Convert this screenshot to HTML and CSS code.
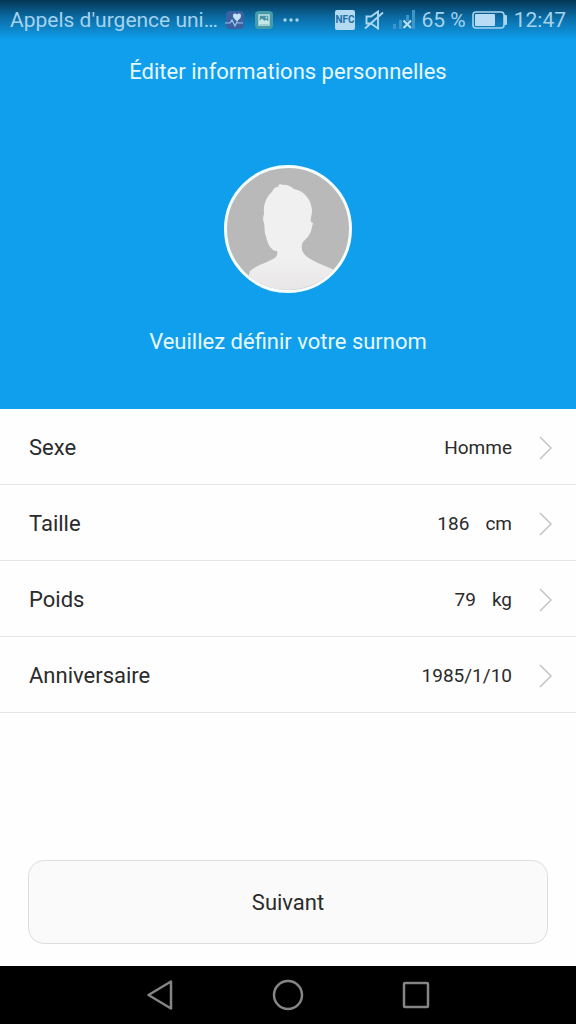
FILE: index.html
```html
<!DOCTYPE html>
<html lang="fr">
<head>
<meta charset="utf-8">
<meta name="viewport" content="width=device-width, initial-scale=1">
<title>Éditer informations personnelles</title>
<link rel="stylesheet" href="styles.css">
</head>
<body>
<header class="hero">
  <div class="status">
    <span class="carrier">Appels d'urgence uni…</span>
    <div class="notifications">
      <svg class="app-icon" width="20" height="20" viewBox="0 0 20 20" aria-hidden="true">
        <rect x="1" y="1" width="18" height="18" rx="4" fill="#3c61a3"/>
        <path d="M12 11.500L8.600 8C6.500 3.500 10.500 2.500 12 4.500C13.500 2.500 17.500 3.500 15.400 8Z" fill="#c4e2f5"/>
        <path d="M0 13H5L7 10L10 16L12 12L13 13H18" fill="none" stroke="#9ac5e7" stroke-width="1.200"/>
      </svg>
      <svg class="app-icon" width="20" height="20" viewBox="0 0 20 20" aria-hidden="true">
        <rect x="1" y="1" width="18" height="18" rx="4" fill="#459ba7"/>
        <rect x="5" y="5" width="10" height="10" fill="#4591a3" stroke="#bfe2e5" stroke-width="1.500"/>
        <path d="M5 14V11.500L8 8.500L10.500 11L12 9.500L15 12V14Z" fill="#c5e6e7"/>
        <circle cx="12.500" cy="7.500" r="1" fill="#c5e6e7"/>
      </svg>
      <svg width="16" height="4" viewBox="0 0 16 4" aria-hidden="true">
        <g fill="#a9d6f2"><circle cx="2" cy="2" r="1.700"/><circle cx="8" cy="2" r="1.700"/><circle cx="14" cy="2" r="1.700"/></g>
      </svg>
    </div>
    <div class="system">
      <span class="nfc">NFC</span>
      <svg class="mute" width="20" height="20" viewBox="0 0 20 20" aria-hidden="true">
        <path d="M2.500 6.500H7L14 1.500V18.500L7 13.500H2.500ZM1 18.500L19 2.500" fill="none" stroke="#acd7f1" stroke-width="1.900"/>
      </svg>
      <svg class="signal" width="24" height="20" viewBox="0 0 24 20" aria-hidden="true">
        <g fill="#3e95c9"><rect x="1" y="14" width="3" height="5"/><rect x="7" y="10" width="3" height="9"/><rect x="14" y="5" width="3" height="6"/><rect x="20" y="0" width="3" height="19"/></g>
        <path d="M11.500 10.500L19 18M19 10.500L11.500 18" stroke="#c1e2f5" stroke-width="2"/>
      </svg>
      <span>65 %</span>
      <svg class="battery" width="36" height="18" viewBox="0 0 36 18" aria-hidden="true">
        <rect x="1" y="1" width="31" height="16" rx="3" fill="none" stroke="#a9d5ef" stroke-width="1.600"/>
        <rect x="3" y="3" width="20" height="12" rx="1" fill="#b7dcf3"/>
        <path d="M32 4H34Q35 4 35 5V13Q35 14 34 14H32Z" fill="#a9d5ef"/>
      </svg>
      <time>12:47</time>
    </div>
  </div>
  <h1 class="title">Éditer informations personnelles</h1>
  <button class="avatar" type="button" aria-label="Photo de profil">
    <svg class="portrait" viewBox="0 0 122 122" aria-hidden="true">
      <defs><linearGradient id="skin" x2="0" y2="1"><stop offset=".7" stop-color="#f1f0f0"/><stop offset="1" stop-color="#e8e6e7"/></linearGradient></defs>
      <path d="M51 18L53 16L56 17C61 16 64 19 67 21C77 23 84 31 85 42C85 48 83 51 84 54L86 55L84 63C83 67 79 71 76 74C74 78 74 83 78 87C84 93 98 98 108 102L104 122H18L23 103C28 98 39 95 46 91C50 89 51 86 50 83C44 83 40 75 39 68C37 64 38 59 37 55C35 50 37 48 37 45C36 36 40 28 45 24C46 21 49 18 53 19Z" fill="url(#skin)"/>
    </svg>
  </button>
  <button class="nickname" type="button">Veuillez définir votre surnom</button>
</header>
<main class="content">
  <div class="rows">
    <button class="row" type="button"><span class="label">Sexe</span><span class="value">Homme</span><svg class="chevron" width="14" height="24" viewBox="0 0 14 24" aria-hidden="true"><path d="M1 1L12 12L1 23"/></svg></button>
    <button class="row" type="button"><span class="label">Taille</span><span class="value"><span>186</span><span>cm</span></span><svg class="chevron" width="14" height="24" viewBox="0 0 14 24" aria-hidden="true"><path d="M1 1L12 12L1 23"/></svg></button>
    <button class="row" type="button"><span class="label">Poids</span><span class="value"><span>79</span><span>kg</span></span><svg class="chevron" width="14" height="24" viewBox="0 0 14 24" aria-hidden="true"><path d="M1 1L12 12L1 23"/></svg></button>
    <button class="row" type="button"><span class="label">Anniversaire</span><span class="value">1985/1/10</span><svg class="chevron" width="14" height="24" viewBox="0 0 14 24" aria-hidden="true"><path d="M1 1L12 12L1 23"/></svg></button>
  </div>
  <button class="next" type="button">Suivant</button>
</main>
<nav class="navbar" aria-label="Navigation système">
  <button type="button" aria-label="Retour"><svg width="32" height="32" viewBox="0 0 32 32"><path d="M4.500 16L27 2.500V29.500Z"/></svg></button>
  <button type="button" aria-label="Accueil"><svg width="32" height="32" viewBox="0 0 32 32"><circle cx="16" cy="16" r="14"/></svg></button>
  <button type="button" aria-label="Applications récentes"><svg width="32" height="32" viewBox="0 0 32 32"><rect x="4" y="4" width="24" height="24" rx="1"/></svg></button>
</nav>
</body>
</html>
```

FILE: styles.css
```css
* {
  box-sizing: border-box;
}

body {
  margin: 0;
  min-height: 100vh;
  display: flex;
  flex-direction: column;
  background: #fefefe;
  color: #2b2b2b;
  font-family: Roboto, "Liberation Sans", sans-serif;
  font-size: 22px;
  line-height: 28px;
}

button {
  margin: 0;
  padding: 0;
  border: 0;
  background: none;
  color: inherit;
  font: inherit;
  cursor: pointer;
}

svg {
  display: block;
  flex: none;
}

.hero {
  display: flex;
  flex-direction: column;
  align-items: center;
  padding-bottom: 53px;
  background: linear-gradient(#053755 0, #0b6da6 18px, #0f9fed 40px);
  color: #e9f8ff;
}

.status {
  align-self: stretch;
  display: flex;
  align-items: center;
  height: 40px;
  padding: 0 10px;
  color: #a5d3ee;
  font-size: 21px;
  white-space: nowrap;
}

.notifications {
  display: flex;
  align-items: center;
  gap: 9px;
  margin-left: 7px;
}

.system {
  display: flex;
  align-items: center;
  gap: 6px;
  margin-left: auto;
}

.nfc {
  margin-right: 3px;
  border-radius: 2px;
  background: #b3daf1;
  color: #1f6fa5;
  font-size: 10px;
  font-weight: 700;
  line-height: 20px;
}

.mute {
  margin-right: 2px;
}

.title {
  margin: 18px 0 0;
  font-size: 22px;
  font-weight: 400;
}

.avatar {
  width: 128px;
  height: 128px;
  margin-top: 79px;
  border: 3px solid #f5fdff;
  border-radius: 50%;
  overflow: hidden;
  background: #b9b9b9;
}

.portrait {
  width: 100%;
  height: 100%;
}

.nickname {
  margin-top: 35px;
}

.content {
  flex: 1;
  display: flex;
  flex-direction: column;
  justify-content: space-between;
}

.rows {
  display: flex;
  flex-direction: column;
}

.row {
  display: flex;
  align-items: center;
  height: 76px;
  padding: 2px 23px 0 29px;
  border-bottom: 1px solid #e6e6e6;
  text-align: left;
}

.label {
  flex: 1;
}

.value {
  display: flex;
  gap: 16px;
  margin-right: 27px;
  font-size: 19px;
}

.chevron path {
  fill: none;
  stroke: #c4c4c4;
  stroke-width: 1.500;
}

.next {
  height: 84px;
  margin: 24px 28px 22px;
  padding-top: 2px;
  border: 1px solid #dedede;
  border-radius: 16px;
  background: #fafafa;
}

.navbar {
  display: flex;
  justify-content: center;
  gap: 96px;
  padding: 13px 0;
  background: #000;
}

.navbar svg {
  fill: none;
  stroke: #858585;
  stroke-width: 2.500;
  stroke-linejoin: round;
}
```
